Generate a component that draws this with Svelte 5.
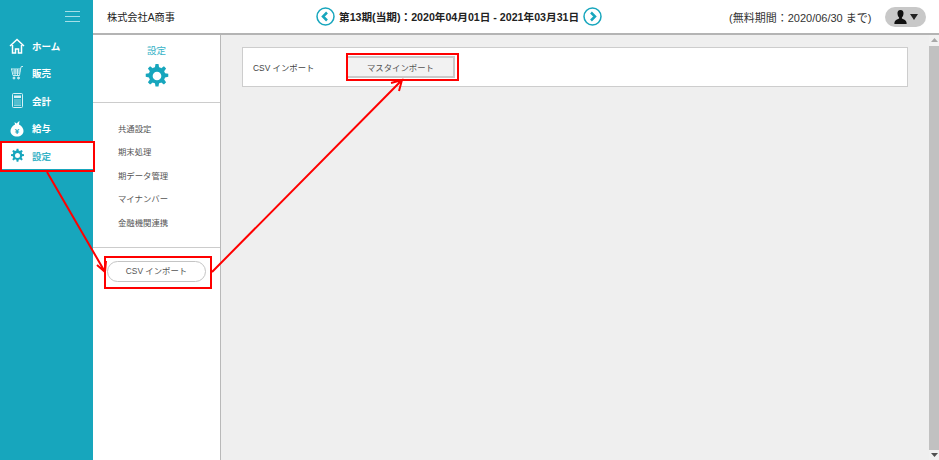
<script>
  const nav = [
    { key: 'home', label: 'ホーム' },
    { key: 'cart', label: '販売' },
    { key: 'calc', label: '会計' },
    { key: 'bag', label: '給与' },
    { key: 'gear', label: '設定', active: true }
  ];
  const sub = ['共通設定', '期末処理', '期データ管理', 'マイナンバー', '金融機関連携'];
  const gearPath = 'M10.6 1h2.8l.5 3a8 8 0 0 1 2 .8l2.5-1.8 2 2-1.8 2.5a8 8 0 0 1 .8 2l3 .5v2.8l-3 .5a8 8 0 0 1-.8 2l1.8 2.5-2 2-2.500-1.800a8 8 0 0 1-2 .8l-.5 3h-2.800l-.5-3a8 8 0 0 1-2-.8l-2.500 1.800-2-2 1.800-2.500a8 8 0 0 1-.8-2l-3-.5v-2.800l3-.5a8 8 0 0 1 .8-2L3.600 5l2-2 2.500 1.800a8 8 0 0 1 2-.8zM12 8a4 4 0 1 0 0 8 4 4 0 0 0 0-8z';
</script>

<div class="app">
  <aside class="side">
    <div class="burger"><i></i><i></i><i></i></div>
    <ul class="nav">
      {#each nav as n}
        <li class:active={n.active}>
          <span class="ico">
            {#if n.key === 'home'}
              <svg width="16" height="16" viewBox="0 0 16 16" fill="none" stroke="#fff" stroke-width="1.500"><path d="M1 8l7-6.500L15 8M3.500 7v8h3v-4h3v4h3V7"/></svg>
            {:else if n.key === 'cart'}
              <svg width="14" height="14" viewBox="0 0 14 14" fill="none" stroke="#cfeef3" stroke-width="1"><path d="M1 3h9.500l-1 6.500H3L1.500 3zM3 5h7.500M3 7h7M5 3v6.500M7.500 3v6.500M10.500 3l.8-2.500H13"/><circle cx="4" cy="12" r="1" fill="#cfeef3"/><circle cx="8.500" cy="12" r="1" fill="#cfeef3"/></svg>
            {:else if n.key === 'calc'}
              <svg width="11" height="15" viewBox="0 0 11 15"><rect x=".5" y=".5" width="10" height="14" rx="1" fill="none" stroke="#d8f1f5"/><rect x="2" y="2.500" width="7" height="2.500" fill="#d8f1f5"/><path d="M2 7h7M2 9h7M2 11h7M2 12.500h7" stroke="#8fd5e0" stroke-width="1"/></svg>
            {:else if n.key === 'bag'}
              <svg width="14" height="17" viewBox="0 0 14 17"><path d="M4.500 2l2 1.500L9.500.8 9 4.500c3 1.500 4.500 4 4.500 6.500 0 3.500-3 5.500-6.500 5.500S.5 14.500.5 11c0-2.500 1.500-5 4.500-6.500z" fill="#fff"/><text x="7" y="13.500" class="yen">¥</text></svg>
            {:else}
              <svg width="15" height="15" viewBox="0 0 24 24"><path fill="#17a6bd" fill-rule="evenodd" d={gearPath}/></svg>
            {/if}
          </span>
          <span class="lbl">{n.label}</span>
        </li>
      {/each}
    </ul>
  </aside>

  <div class="right">
    <header class="top">
      <div class="co">株式会社A商事</div>
      <div class="period">
        <svg width="19" height="19" viewBox="0 0 19 19" fill="none" stroke="#17a6bd"><circle cx="9.500" cy="9.500" r="8.500" stroke-width="1.500"/><path d="M11 5.500l-4 4 4 4" stroke-width="2.500"/></svg>
        <span>第13期(当期)：2020年04月01日 - 2021年03月31日</span>
        <svg width="19" height="19" viewBox="0 0 19 19" fill="none" stroke="#17a6bd"><circle cx="9.500" cy="9.500" r="8.500" stroke-width="1.500"/><path d="M8 5.500l4 4-4 4" stroke-width="2.500"/></svg>
      </div>
      <div class="free">(無料期間：2020/06/30 まで)</div>
      <div class="user">
        <svg width="13" height="14" viewBox="0 0 13 14"><path d="M6.500 0C4.300 0 3.300 1.600 3.500 3.700c.1 1.500.7 3 1.600 3.700v1.100C3 9.500.6 10.300.4 12.800V14h12.200v-1.200c-.2-2.500-2.600-3.300-4.700-4.300V7.400c.9-.7 1.500-2.200 1.600-3.700C9.700 1.600 8.700 0 6.500 0z" fill="#111"/></svg>
        <svg width="8" height="6" viewBox="0 0 8 6"><path d="M0 0h8L4 6z" fill="#222"/></svg>
      </div>
    </header>

    <div class="body">
      <section class="subnav">
        <div class="subhead">
          <div class="subtitle">設定</div>
          <svg width="26" height="26" viewBox="0 0 24 24"><path fill="#17a6bd" fill-rule="evenodd" d={gearPath}/></svg>
        </div>
        <ul class="sublist">
          {#each sub as s}<li>{s}</li>{/each}
        </ul>
        <div class="subfoot"><div class="pill">CSV インポート</div></div>
      </section>

      <main class="main">
        <div class="panel">
          <span class="plabel">CSV インポート</span>
          <button class="master">マスタインポート</button>
        </div>
      </main>

      <div class="scroll">
        <svg class="sarrow" width="7" height="4" viewBox="0 0 7 4"><path d="M0 4h7L3.500 0z" fill="#a8a8a8"/></svg>
        <div class="thumb"></div>
        <svg class="sarrow" width="7" height="4" viewBox="0 0 7 4"><path d="M0 0h7L3.500 4z" fill="#505050"/></svg>
      </div>
    </div>
  </div>

  <div class="mark m1"></div>
  <div class="mark m2"></div>
  <div class="mark m3"></div>
  <svg class="arrows" width="939" height="460" viewBox="0 0 939 460" fill="none" stroke="#f00" stroke-width="2">
    <path d="M47 172L105 272M97 265l8 7 1-11"/>
    <path d="M212 272L402 80M391 83l11-3-3 11"/>
  </svg>
</div>

<style>
  :global(body) { margin: 0; background: #fff; overflow: hidden; }
  .app {
    position: relative; display: flex; width: 939px; height: 460px; overflow: hidden;
    font-family: "Liberation Sans", "Noto Sans CJK JP", sans-serif; font-size: 10px; color: #444;
  }
  ul { list-style: none; margin: 0; padding: 0; }

  .side { width: 93px; flex: none; background: #17a6bd; }
  .burger { display: flex; flex-direction: column; gap: 4px; align-items: flex-end; padding: 11px 13px 0 0; height: 21px; }
  .burger i { display: block; width: 15px; height: 1px; background: #a5dfe8; }
  .nav li { display: flex; align-items: center; height: 27.500px; color: #fff; font-weight: 700; }
  .nav .active { background: #fff; color: #39b3c7; height: 27px; }
  .ico { width: 32px; display: flex; justify-content: center; padding-left: 2px; box-sizing: border-box; }
  .lbl { font-size: 9.500px; }
  .yen { font-size: 8px; font-weight: 700; fill: #17a6bd; text-anchor: middle; font-family: "Liberation Sans", sans-serif; }

  .right { flex: 1; min-width: 0; display: flex; flex-direction: column; }
  .top {
    height: 33px; flex: none; display: flex; align-items: center; background: #fff;
    border-bottom: 2px solid #b4b4b4; color: #222;
  }
  .co { width: 223px; padding-left: 14px; box-sizing: border-box; font-size: 10.200px; }
  .period { display: flex; align-items: center; gap: 4px; width: 300px; font-size: 10.650px; font-weight: 700; color: #222; white-space: nowrap; }
  .period span { width: 240px; text-align: center; }
  .free { margin-left: 113px; margin-right: 14px; width: 142px; flex: none; white-space: nowrap; font-size: 11px; color: #333; text-align: right; }
  .user { width: 41px; height: 20px; border-radius: 10px; background: #c8c8c8; display: flex; align-items: center; justify-content: center; gap: 3px; flex: none; }

  .body { flex: 1; display: flex; min-height: 0; }
  .subnav { width: 127px; flex: none; border-right: 1px solid #b9b9b9; background: #fff; }
  .subhead { height: 58px; display: flex; flex-direction: column; align-items: center; border-bottom: 1px solid #ccc; padding-top: 9px; }
  .subtitle { color: #39b3c7; font-size: 9.500px; line-height: 14px; margin-bottom: 5px; }
  .sublist { padding: 14.500px 0 0 25px; height: 145px; box-sizing: border-box; border-bottom: 1px solid #ccc; }
  .sublist li { height: 23.500px; line-height: 23.500px; color: #555; font-size: 8.400px; }
  .subfoot { padding: 13px 0 0 14px; }
  .pill {
    width: 99px; height: 21px; box-sizing: border-box; border: 1px solid #c4c4c4; border-radius: 11px;
    text-align: center; line-height: 19px; font-size: 8.400px; color: #555;
  }

  .main { flex: 1; min-width: 0; background: #efefef; padding: 12px 21px 0 20.500px; }
  .panel {
    height: 40px; box-sizing: border-box; background: #fff; border: 1px solid #cdcdcd;
    display: flex; align-items: center; padding-left: 10.500px;
  }
  .plabel { width: 93px; color: #444; font-size: 8.400px; flex: none; }
  .master {
    width: 109px; height: 22px; padding: 0; border: 2px solid #c9c9c9; background: #f2f2f2;
    font: inherit; font-size: 8.400px; color: #555;
  }

  .scroll { width: 10px; flex: none; background: #f1f1f1; display: flex; flex-direction: column; align-items: center; justify-content: space-between; padding: 3px 0; box-sizing: border-box; }
  .thumb { flex: 1; width: 10px; background: #c1c1c1; margin: 4px 0 3px; }

  .mark { position: absolute; border: 2px solid #f00; box-sizing: border-box; pointer-events: none; }
  .m1 { left: 0; top: 141px; width: 95px; height: 31px; }
  .m2 { left: 104px; top: 256px; width: 108px; height: 33px; }
  .m3 { left: 346px; top: 53px; width: 113px; height: 28px; }
  .arrows { position: absolute; left: 0; top: 0; pointer-events: none; }
</style>
